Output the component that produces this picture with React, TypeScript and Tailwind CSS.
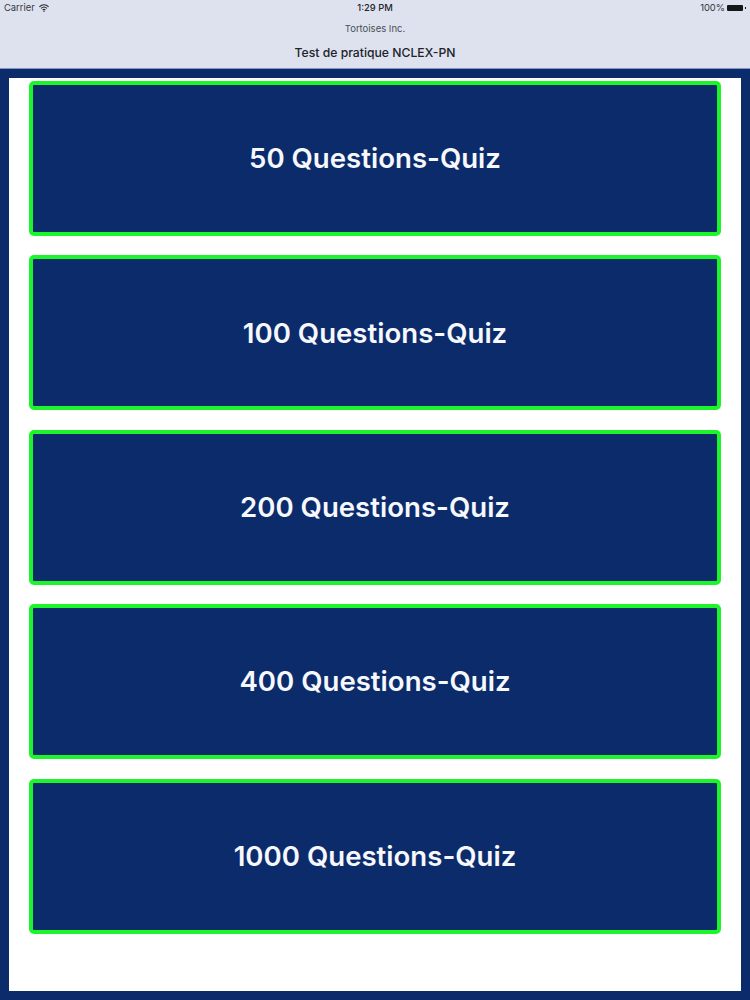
const quizzes = [50, 100, 200, 400, 1000];

function StatusBar() {
  return (
    <div className="flex h-[15px] items-center justify-between pl-[4px] pr-[4px] pt-[1px] text-[9.4px] text-[#33363d]">
      <div className="flex items-center gap-[4px]">
        <span>Carrier</span>
        <svg width="10" height="8" viewBox="0 0 10 8" fill="none" stroke="#23262b" strokeWidth="1.1">
          <path d="M0.4 2.8 C3 0.1 7 0.1 9.6 2.8" />
          <path d="M2 4.4 C3.7 2.8 6.3 2.8 8 4.4" />
          <path d="M3.6 5.9 C4.4 5.2 5.6 5.2 6.4 5.9" />
          <path d="M5 8 L4 6.9 C4.6 6.5 5.4 6.5 6 6.9 Z" fill="#23262b" stroke="none" />
        </svg>
      </div>
      <div className="flex items-center gap-[2px]">
        <span>100%</span>
        <div className="h-[6px] w-[16px] rounded-[1px] bg-[#15171a]"></div>
        <div className="h-[2px] w-[1px] bg-[#15171a]"></div>
      </div>
    </div>
  );
}

export default function App() {
  return (
    <div className="flex h-[1000px] w-[750px] flex-col bg-[#0b2b6b] font-['Inter',sans-serif]">
      <header className="relative h-[69px] shrink-0 border-b border-[#7f97c4] bg-[#dee2ee]">
        <StatusBar />
        <div className="absolute left-0 right-0 top-[1px] flex h-[15px] items-center justify-center text-[9.4px] font-medium text-[#23262b]">
          1:29 PM
        </div>
        <div className="mt-[7px] text-center text-[9.5px] leading-[14px] text-[#4a4e57]">
          Tortoises Inc.
        </div>
        <div className="mt-[9px] text-center text-[12.2px] font-medium leading-[16px] text-[#20232a]">
          Test de pratique NCLEX-PN
        </div>
      </header>
      <main className="flex min-h-0 flex-1 flex-col px-[9px] pb-[9px] pt-[9px]">
        <div className="flex flex-1 flex-col gap-[19.4px] bg-white px-[20px] pt-[3px]">
          {quizzes.map((count) => (
            <button
              key={count}
              className="flex h-[155px] w-full items-center justify-center rounded-[5px] border-4 border-[#1bf52a] bg-[#0b2b6b] pt-[1px] text-[27.6px] font-semibold text-[#f6f8fc]"
            >
              {count} Questions-Quiz
            </button>
          ))}
        </div>
      </main>
    </div>
  );
}
